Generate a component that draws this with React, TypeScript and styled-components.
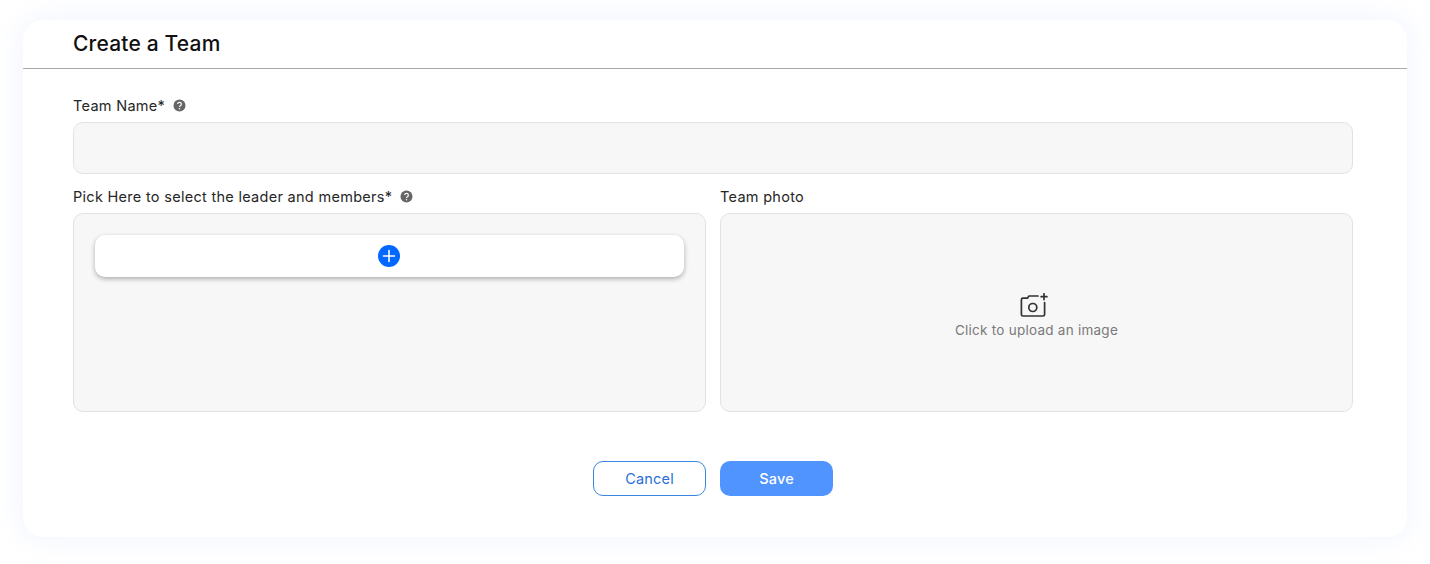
import styled, { createGlobalStyle } from 'styled-components'

const GlobalStyle = createGlobalStyle`
	html, body {
		margin: 0;
		padding: 0;
		background: #ffffff;
	}
	body {
		font-family: 'Inter', 'Liberation Sans', sans-serif;
	}
`

function HelpIcon() {
	return (
		<HelpBadge>
			<svg width="13" height="13" viewBox="0 0 13 13">
				<circle cx="6.5" cy="6.5" r="6" fill="#666666" />
				<path d="M4.7 5.1a1.8 1.8 0 1 1 2.7 1.6c-.6.3-.9.6-.9 1.2" fill="none" stroke="#fff" strokeWidth="1.2" />
				<circle cx="6.5" cy="9.7" r=".75" fill="#fff" />
			</svg>
		</HelpBadge>
	)
}

function PlusIcon() {
	return (
		<svg width="22" height="22" viewBox="0 0 22 22">
			<circle cx="11" cy="11" r="11" fill="#0068ff" />
			<path d="M11 5.5v11M5.5 11h11" stroke="#fff" strokeWidth="1.6" strokeLinecap="round" />
		</svg>
	)
}

function CameraPlusIcon() {
	return (
		<CameraSvg width="28" height="24" viewBox="0 0 28 24" fill="none" stroke="#333333" strokeWidth="1.7" strokeLinecap="round" strokeLinejoin="round">
			<path d="M18 3H9L7.4 5.2H3A1.6 1.6 0 0 0 1.4 6.8v14.6A1.6 1.6 0 0 0 3 23h20a1.6 1.6 0 0 0 1.6-1.6V9.5" />
			<circle cx="12.8" cy="14.5" r="4" />
			<path d="M24 .8v5.8M21.1 3.7h5.8" />
		</CameraSvg>
	)
}

export default function App() {
	return (
		<>
			<GlobalStyle />
			<Page>
				<Card>
					<Header>
						<Title>Create a Team</Title>
					</Header>
					<Body>
						<Label>
							Team Name* <HelpIcon />
						</Label>
						<NameInput />
						<Columns>
							<Column>
								<Label>
									Pick Here to select the leader and members* <HelpIcon />
								</Label>
								<Panel $padded>
									<AddRow>
										<PlusIcon />
									</AddRow>
								</Panel>
							</Column>
							<Column>
								<Label>Team photo</Label>
								<Panel $centered>
									<CameraPlusIcon />
									<UploadText>Click to upload an image</UploadText>
								</Panel>
							</Column>
						</Columns>
						<Actions>
							<CancelButton>Cancel</CancelButton>
							<SaveButton>Save</SaveButton>
						</Actions>
					</Body>
				</Card>
			</Page>
		</>
	)
}

const Page = styled.div`
	box-sizing: border-box;
	width: 1430px;
	height: 564px;
	padding: 20px 23px 27px;
	background: #ffffff;
	overflow: hidden;
`
const Card = styled.div`
	height: 517px;
	background: #ffffff;
	border-radius: 20px;
	box-shadow: 0 0 24px 4px rgba(200, 212, 255, 0.22);
`
const Header = styled.div`
	box-sizing: border-box;
	height: 49px;
	padding: 12px 50px 0;
	border-bottom: 1px solid #a8a8a8;
`
const Title = styled.h1`
	margin: 0;
	font-size: 21px;
	line-height: 24px;
	font-weight: 500;
	color: #111111;
	letter-spacing: 0.18px;
`
const Body = styled.div`
	padding: 28px 54px 0 50px;
`
const Label = styled.div`
	display: flex;
	align-items: center;
	height: 18px;
	margin-bottom: 7px;
	font-size: 14.5px;
	line-height: 18px;
	color: #262626;
	white-space: pre;
	letter-spacing: 0.29px;
`
const HelpBadge = styled.span`
	display: inline-flex;
	margin-left: 3px;
	margin-top: -1px;
`
const NameInput = styled.div`
	box-sizing: border-box;
	height: 52px;
	background: #f7f7f7;
	border: 1px solid #e2e2e2;
	border-radius: 10px;
`
const Columns = styled.div`
	display: grid;
	grid-template-columns: 633px 633px;
	column-gap: 14px;
	margin-top: 14px;
`
const Column = styled.div`
	display: flex;
	flex-direction: column;
	min-width: 0;
`
const Panel = styled.div<{ $padded?: boolean; $centered?: boolean }>`
	box-sizing: border-box;
	height: 199px;
	background: #f7f7f7;
	border: 1px solid #e2e2e2;
	border-radius: 10px;
	padding: ${({ $padded, $centered }) => ($padded ? '21px 21px 0' : $centered ? '6px 0 0' : '0')};
	display: flex;
	flex-direction: column;
	align-items: ${({ $centered }) => ($centered ? 'center' : 'stretch')};
	justify-content: ${({ $centered }) => ($centered ? 'center' : 'flex-start')};
`
const AddRow = styled.div`
	display: flex;
	align-items: center;
	justify-content: center;
	height: 42px;
	padding-right: 1px;
	background: #ffffff;
	border-radius: 10px;
	box-shadow: 0 2px 5px rgba(0, 0, 0, 0.3);
`
const CameraSvg = styled.svg`
	margin-right: 5px;
`
const UploadText = styled.div`
	margin-top: 4px;
	font-size: 13.5px;
	line-height: 18px;
	color: #7a7a7a;
	letter-spacing: 0.25px;
`
const Actions = styled.div`
	display: flex;
	justify-content: center;
	gap: 14px;
	margin-top: 49px;
`
const ActionButton = styled.button`
	box-sizing: border-box;
	width: 113px;
	height: 35px;
	padding: 0;
	border-radius: 10px;
	font-family: inherit;
	font-size: 14.5px;
	letter-spacing: 0.2px;
`
const CancelButton = styled(ActionButton)`
	background: #ffffff;
	border: 1px solid #3a86e2;
	color: #2a6fd8;
`
const SaveButton = styled(ActionButton)`
	background: #4f94ff;
	border: none;
	color: #ffffff;
	font-weight: 500;
`
